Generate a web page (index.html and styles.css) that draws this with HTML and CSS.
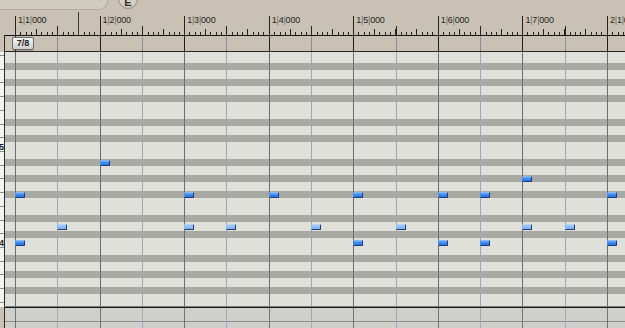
FILE: index.html
```html
<!DOCTYPE html>
<html>
<head lang="en">
    <meta charset="UTF-8">
    <title>Piano roll</title>
    <link rel="stylesheet" href="styles.css">
</head>
<body>
<div id="top">
    <div class="panel"></div>
    <div class="e-btn">E</div>
</div>
<div id="ruler">
    <div class="bar"><span class="pos">1<em>|</em>1<em>|</em>000</span><i class="loop"></i></div>
    <div class="bar"><span class="pos">1<em>|</em>2<em>|</em>000</span></div>
    <div class="bar"><span class="pos">1<em>|</em>3<em>|</em>000</span></div>
    <div class="bar"><span class="pos">1<em>|</em>4<em>|</em>000</span></div>
    <div class="bar"><span class="pos">1<em>|</em>5<em>|</em>000</span></div>
    <div class="bar"><span class="pos">1<em>|</em>6<em>|</em>000</span></div>
    <div class="bar"><span class="pos">1<em>|</em>7<em>|</em>000</span></div>
    <div class="bar"><span class="pos">2<em>|</em>1<em>|</em>000</span></div>
</div>
<div id="editor">
    <div class="lane sig">
        <div class="gutter"></div>
        <div class="track">
            <div class="bars">
                <div class="bar"></div><div class="bar"></div><div class="bar"></div><div class="bar"></div>
                <div class="bar"></div><div class="bar"></div><div class="bar"></div><div class="bar"></div>
            </div>
            <span class="meter">7/8</span>
        </div>
    </div>
    <div class="lane roll">
        <div class="gutter keys">
            <span class="oct c5">C5</span>
            <span class="oct c4">C4</span>
        </div>
        <div class="track">
            <div class="bars">
                <div class="bar"></div><div class="bar"></div><div class="bar"></div><div class="bar"></div>
                <div class="bar"></div><div class="bar"></div><div class="bar"></div><div class="bar"></div>
            </div>
            <!-- --x: half bars from 1|1|000, --p: rows down from C6 -->
            <div class="note" style="--x:2;--p:14"></div>
            <div class="note" style="--x:12;--p:16"></div>

            <div class="note" style="--x:0;--p:18"></div>
            <div class="note" style="--x:4;--p:18"></div>
            <div class="note" style="--x:6;--p:18"></div>
            <div class="note" style="--x:8;--p:18"></div>
            <div class="note" style="--x:10;--p:18"></div>
            <div class="note" style="--x:11;--p:18"></div>
            <div class="note" style="--x:14;--p:18"></div>

            <div class="note soft" style="--x:1;--p:22"></div>
            <div class="note soft" style="--x:4;--p:22"></div>
            <div class="note soft" style="--x:5;--p:22"></div>
            <div class="note soft" style="--x:7;--p:22"></div>
            <div class="note soft" style="--x:9;--p:22"></div>
            <div class="note soft" style="--x:12;--p:22"></div>
            <div class="note soft" style="--x:13;--p:22"></div>

            <div class="note" style="--x:0;--p:24"></div>
            <div class="note" style="--x:8;--p:24"></div>
            <div class="note" style="--x:10;--p:24"></div>
            <div class="note" style="--x:11;--p:24"></div>
            <div class="note" style="--x:14;--p:24"></div>
        </div>
    </div>
    <div class="lane vel">
        <div class="gutter"></div>
        <div class="track">
            <div class="bars">
                <div class="bar"></div><div class="bar"></div><div class="bar"></div><div class="bar"></div>
                <div class="bar"></div><div class="bar"></div><div class="bar"></div><div class="bar"></div>
            </div>
        </div>
    </div>
</div>
</body>
</html>
```

FILE: styles.css
```css
*{
    margin: 0;
    padding: 0;
}
body{
    width: 625px;
    height: 328px;
    overflow: hidden;
    background: #c9c1b3;
    font-family: "Liberation Sans", Arial, sans-serif;
    user-select: none;
}

/* top strip */
#top{
    display: flex;
    height: 10px;
}
.panel{
    width: 107px;
    height: 9px;
    background: #d2cbbf;
    border-right: 1px solid #b2aa9b;
    border-bottom: 1px solid #b2aa9b;
    border-bottom-right-radius: 9px;
}
.e-btn{
    flex: none;
    width: 18px;
    height: 18px;
    margin: -11px 0 0 10px;
    border: 1px solid #958d80;
    border-radius: 50%;
    background: linear-gradient(#e4ded4, #cec7bb);
    font-size: 11px;
    font-weight: bold;
    line-height: 25px;
    text-align: center;
    color: #333;
}

/* ruler */
#ruler{
    display: flex;
    align-items: flex-end;
    height: 25px;
    padding-left: 15px;
    overflow: hidden;
}
#ruler .bar{
    flex: 0 0 84.571px;
    box-sizing: border-box;
    height: 19px;
    border-left: 1px solid #222;
    position: relative;
    background:
        linear-gradient(#222, #222) 41.3px 100% / 1px 9px no-repeat,
        repeating-linear-gradient(90deg, #222 0 1px, transparent 1px 21.143px) -1px 100% / 100% 6px no-repeat,
        repeating-linear-gradient(90deg, #222 0 1px, transparent 1px 5.286px) -1px 100% / 100% 3px no-repeat;
}
.pos{
    display: block;
    padding-left: 2px;
    font-size: 9px;
    line-height: 9px;
    letter-spacing: -0.2px;
    color: #262626;
    white-space: nowrap;
}
.pos em{
    font-style: normal;
    color: #6a6a6a;
}
.loop{
    position: absolute;
    left: 62px;
    top: -4px;
    width: 1px;
    height: 23px;
    background: #3a3a3a;
}

/* editor lanes */
.lane{
    display: flex;
}
.gutter{
    flex: none;
    width: 4px;
}
.track{
    flex: 1;
    position: relative;
    overflow: hidden;
    border-left: 1px solid #2b2b2b;
}
.bars{
    display: flex;
    height: 100%;
    padding-left: 10px;
}
.bars .bar{
    flex: 0 0 84.571px;
    box-sizing: border-box;
    border-left: 1px solid;
    position: relative;
}
.bars .bar::after{
    content: "";
    position: absolute;
    left: 41.29px;
    top: 0;
    bottom: 0;
    width: 1px;
}

/* time signature lane */
.sig .track{
    height: 15px;
    border-top: 1px solid #141414;
    border-bottom: 1px solid #262626;
}
.sig .bar{
    border-color: #1c1c1c;
}
.sig .bar::after{
    background: #8d8d95;
}
.meter{
    position: absolute;
    left: 7px;
    top: 1px;
    width: 22px;
    height: 13px;
    box-sizing: border-box;
    border: 1px solid #6b6b6b;
    border-radius: 2px;
    background: linear-gradient(#f5f5f5, #cbcbcb);
    box-shadow: 0 1px 0 rgba(0,0,0,.2);
    font-size: 9px;
    font-weight: bold;
    line-height: 11px;
    text-align: center;
    color: #222;
}

/* note lane */
.roll .track{
    height: 254px;
    border-bottom: 1px solid #7c7c7c;
    background: linear-gradient(to bottom,
        #e0e0da 0 16px, #a9a9a3 16px 23px,
        #e0e0da 23px 32px, #a9a9a3 32px 39px,
        #e0e0da 39px 48px, #a9a9a3 48px 55px,
        #e0e0da 55px 72px, #a9a9a3 72px 79px,
        #e0e0da 79px 88px, #a9a9a3 88px 95px,
        #e0e0da 95px 96px) 0 -5px / 100% 96px repeat-y;
}
.roll .bar{
    border-color: #6c6c74;
}
.roll .bar::after{
    background: #a2a2b6;
}
.keys{
    position: relative;
    overflow: hidden;
    height: 255px;
    background: #f3f3f1 repeating-linear-gradient(to bottom, #8a8a8a 0 1px, transparent 1px 13.714px) 0 3px;
}
.oct{
    position: absolute;
    right: 0;
    width: 14px;
    display: flex;
    justify-content: flex-end;
    font-size: 9px;
    font-weight: bold;
    line-height: 8px;
    color: #222;
    background: #f3f3f1;
}
.c5{
    top: 91px;
}
.c4{
    top: 187px;
}
.note{
    position: absolute;
    left: calc(10px + var(--x) * 42.286px);
    top: calc(var(--p) * 8px - 4px);
    width: 10px;
    height: 6px;
    box-sizing: border-box;
    border: 1px solid #1b3c7e;
    border-top-color: #86b9f4;
    border-left-color: #4c90e6;
    border-radius: 1px;
    background: linear-gradient(#6fa9f2, #3986ea 50%, #2c74dc);
}
.note.soft{
    border-top-color: #b5d4f7;
    border-left-color: #8ab8ef;
    background: linear-gradient(#a6cbf6, #7fb0ee);
}

/* velocity lane */
.vel .track{
    height: 20px;
    border-top: 1px solid #1a1a1a;
    background: #cfcfcb linear-gradient(#8b8b8b, #8b8b8b) 0 13px / 100% 1px no-repeat;
}
.vel .bar{
    border-color: #737373;
}
.vel .bar::after{
    background: #a6a6b8;
}
```
